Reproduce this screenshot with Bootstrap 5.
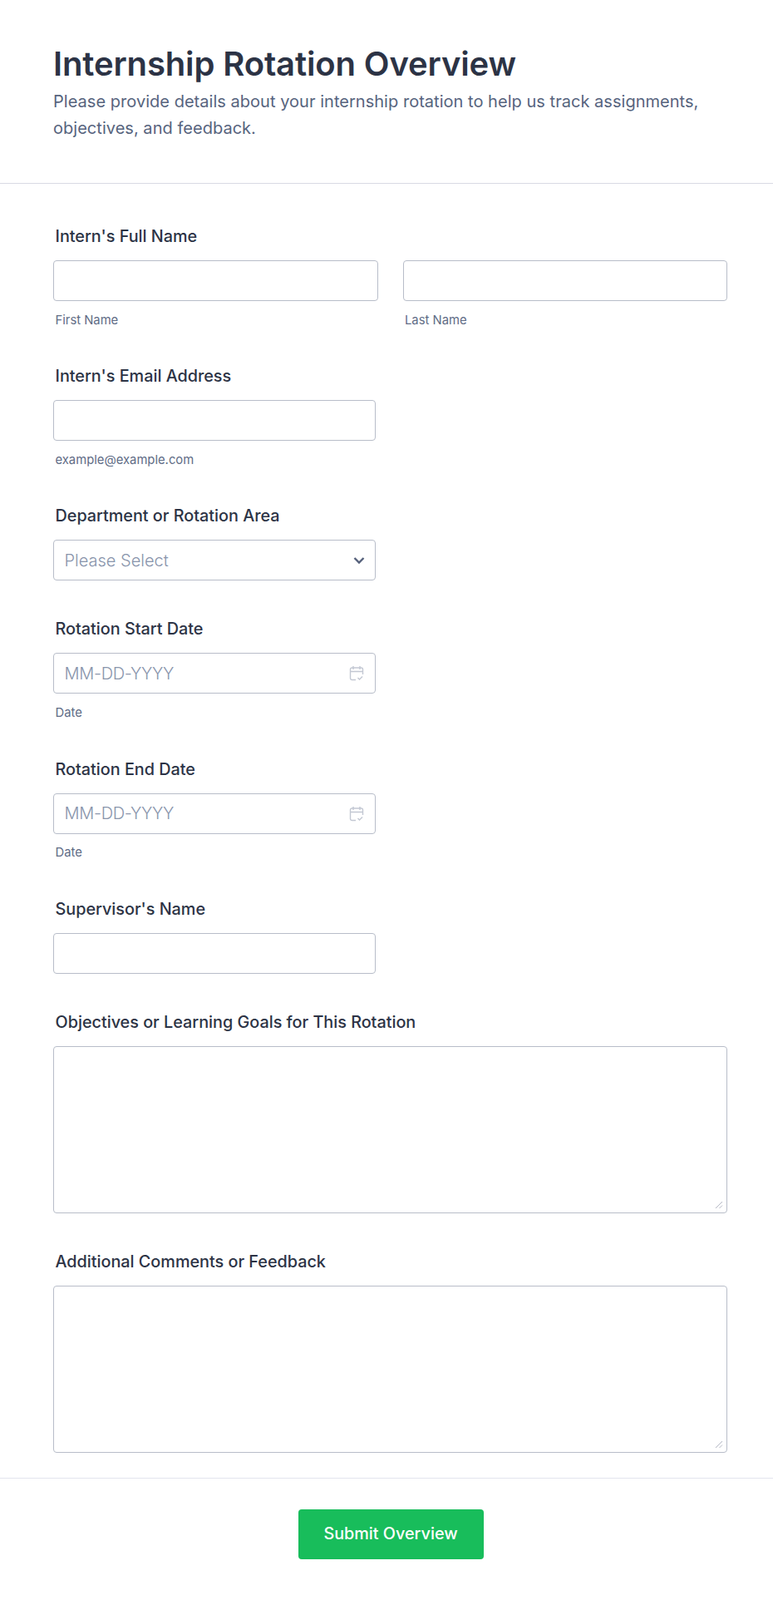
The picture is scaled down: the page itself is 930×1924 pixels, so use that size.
<!DOCTYPE html>
<html lang="en">
<head>
  <meta charset="UTF-8">
  <meta name="viewport" content="width=device-width, initial-scale=1.0">
  <title>Internship Rotation Overview</title>
  <link href="https://cdn.jsdelivr.net/npm/bootstrap@5.3.0/dist/css/bootstrap.min.css" rel="stylesheet">
  <style>
    body { font-family: Inter, "Liberation Sans", sans-serif; color: #2c3345; background: #fff; }
    .page-head { padding: 53px 64px 50px; border-bottom: 1px solid #d8dae4; }
    .page-head h1 { font-size: 40px; line-height: 48px; font-weight: 600; letter-spacing: -0.13px; margin: 0 0 5px; color: #2c3345; }
    .page-head p { font-size: 20px; line-height: 32px; letter-spacing: 0.03px; margin: 0; color: #57647e; }
    .form-body { padding: 49px 55px 0 64px; }
    .field-block { margin-bottom: 44px; }
    .field-label { display: block; font-size: 19.8px; line-height: 28px; font-weight: 500; color: #2c3345; margin: 0 0 15px 2.5px; }
    .field-hint { font-size: 14.8px; line-height: 17.7px; color: #5f6c86; margin: 14.5px 0 0 2.5px; }
    .form-control.box-input, .form-select.box-input { height: 49px; border: 1px solid #b8bdc9; border-radius: 4px; font-size: 20px; font-weight: 300; padding: 0 12.5px; color: #2c3345; box-shadow: none; }
    .box-input::placeholder { color: #8894ab; letter-spacing: -0.3px; }
    .form-select.box-input { color: #8894ab; padding-right: 36px; background-position: right 12px center; background-size: 14px 10px; background-image: url("data:image/svg+xml,%3csvg xmlns='http://www.w3.org/2000/svg' viewBox='0 0 14 10'%3e%3cpath fill='none' stroke='%23545f7a' stroke-width='2.4' d='M1.5 2l5.5 5.5L12.5 2'/%3e%3c/svg%3e"); }
    .half-col { width: 388px; }
    .name-grid { display: grid; grid-template-columns: 390.5px 390.5px; column-gap: 30px; }
    textarea.form-control.box-area { display: block; height: 201px; border: 1px solid #b8bdc9; border-radius: 4px; font-size: 20px; box-shadow: none; resize: none; }
    .cal-icon { position: absolute; top: 15px; right: 14px; }
    .grip-icon { position: absolute; right: 5px; bottom: 5px; }
    .form-foot { border-top: 1px solid #e3e5ee; margin-top: 30px; padding: 37px 0 49px 10px; }
    .btn.submit-btn { width: 223px; height: 60px; background: #18bd5b; border: 0; border-radius: 4px; color: #fff; font-size: 19.8px; font-weight: 500; font-family: Inter, "Liberation Sans", sans-serif; }
  </style>
</head>
<body>
<div class="page-head">
  <h1>Internship Rotation Overview</h1>
  <p>Please provide details about your internship rotation to help us track assignments, objectives, and feedback.</p>
</div>

<form class="form-body">
  <div class="field-block">
    <label class="field-label">Intern's Full Name</label>
    <div class="name-grid">
      <div>
        <input type="text" class="form-control box-input">
        <div class="field-hint">First Name</div>
      </div>
      <div>
        <input type="text" class="form-control box-input">
        <div class="field-hint">Last Name</div>
      </div>
    </div>
  </div>

  <div class="field-block half-col">
    <label class="field-label">Intern's Email Address</label>
    <input type="email" class="form-control box-input">
    <div class="field-hint">example@example.com</div>
  </div>

  <div class="field-block half-col">
    <label class="field-label">Department or Rotation Area</label>
    <select class="form-select box-input">
      <option>Please Select</option>
    </select>
  </div>

  <div class="field-block half-col">
    <label class="field-label">Rotation Start Date</label>
    <div class="position-relative">
      <input type="text" class="form-control box-input" placeholder="MM-DD-YYYY">
      <svg class="cal-icon" width="18" height="20" viewBox="0 0 18 20" fill="none" stroke="#c3c8d3" stroke-width="1.4"><path d="M8 17.5H3.5a2 2 0 0 1-2-2V5a2 2 0 0 1 2-2h11a2 2 0 0 1 2 2v6M1.5 7.5h15M5 1v4M13 1v4M10.5 15l2 2 3.5-3.5"/></svg>
    </div>
    <div class="field-hint">Date</div>
  </div>

  <div class="field-block half-col">
    <label class="field-label">Rotation End Date</label>
    <div class="position-relative">
      <input type="text" class="form-control box-input" placeholder="MM-DD-YYYY">
      <svg class="cal-icon" width="18" height="20" viewBox="0 0 18 20" fill="none" stroke="#c3c8d3" stroke-width="1.4"><path d="M8 17.5H3.5a2 2 0 0 1-2-2V5a2 2 0 0 1 2-2h11a2 2 0 0 1 2 2v6M1.5 7.5h15M5 1v4M13 1v4M10.5 15l2 2 3.5-3.5"/></svg>
    </div>
    <div class="field-hint">Date</div>
  </div>

  <div class="field-block half-col">
    <label class="field-label">Supervisor's Name</label>
    <input type="text" class="form-control box-input">
  </div>

  <div class="field-block">
    <label class="field-label">Objectives or Learning Goals for This Rotation</label>
    <div class="position-relative">
      <textarea class="form-control box-area"></textarea>
      <svg class="grip-icon" width="10" height="10" viewBox="0 0 10 10" stroke="#b4b8c4" stroke-width="1"><path d="M1 9l8-8M5.5 9L9 5.5"/></svg>
    </div>
  </div>

  <div class="field-block mb-0">
    <label class="field-label">Additional Comments or Feedback</label>
    <div class="position-relative">
      <textarea class="form-control box-area"></textarea>
      <svg class="grip-icon" width="10" height="10" viewBox="0 0 10 10" stroke="#b4b8c4" stroke-width="1"><path d="M1 9l8-8M5.5 9L9 5.5"/></svg>
    </div>
  </div>
</form>

<div class="form-foot d-flex justify-content-center">
  <button type="button" class="btn submit-btn">Submit Overview</button>
</div>

<script src="https://cdn.jsdelivr.net/npm/bootstrap@5.3.0/dist/js/bootstrap.bundle.min.js"></script>
</body>
</html>
